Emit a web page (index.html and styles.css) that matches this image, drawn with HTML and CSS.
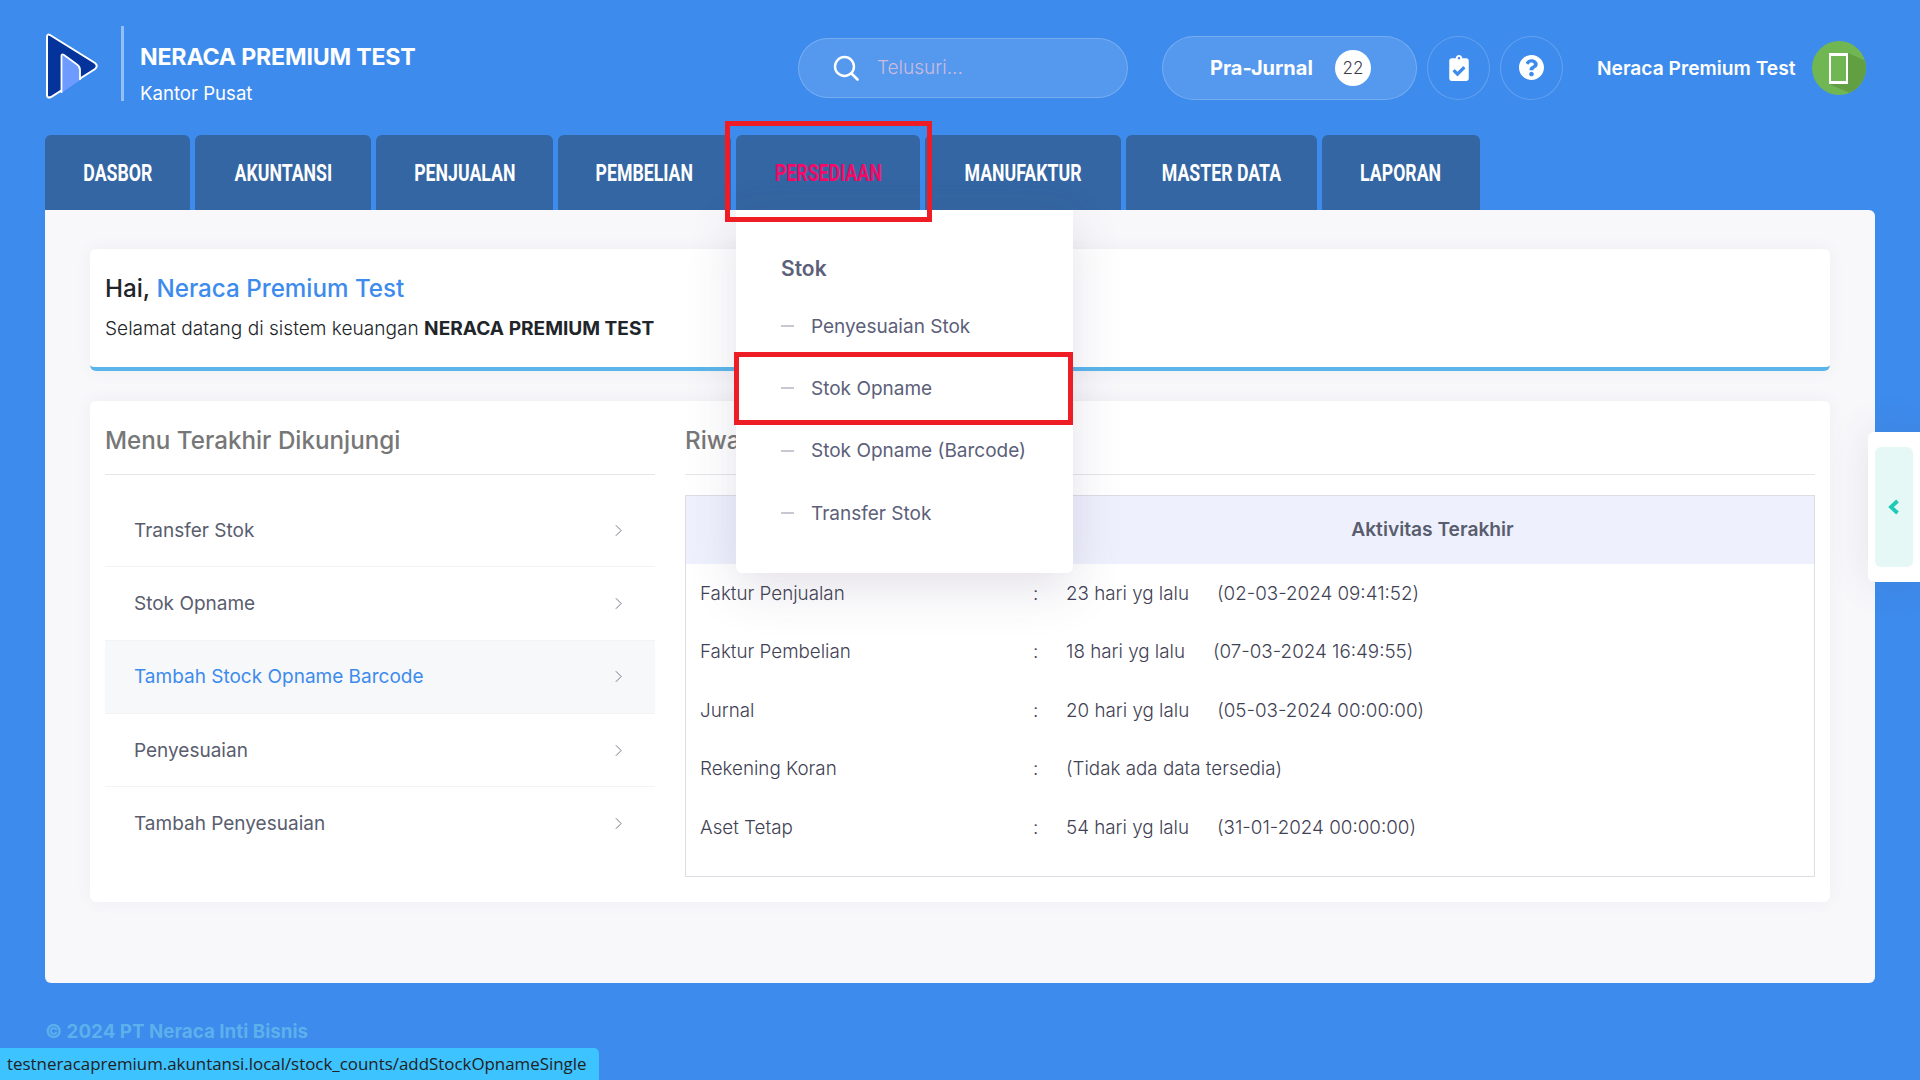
FILE: index.html
```html
<!DOCTYPE html>
<html lang="id">
<head>
<meta charset="utf-8">
<title>Neraca Premium Test</title>
<link rel="stylesheet" href="styles.css">
</head>
<body>
<header class="topbar">
  <div class="brand">
    <svg class="logo" viewBox="0 0 52 66" width="52" height="66">
      <path d="M4 2 L49 30 Q52.500 33 49 36 L5 64 Q1 65.500 1 62 V4 Q1 0.500 4 2 Z" fill="#04349b" stroke="#fff" stroke-width="2"/>
      <path d="M15.500 21 L31 32 Q34 34 34 37 V47 L15.500 60 Z" fill="#6d9bff"/>
      <path d="M15.500 60 V23 Q15.500 20.500 18 22 L31 31.500 Q34 33.500 34 37 V47" fill="none" stroke="#fff" stroke-width="1.800"/>
    </svg>
    <div class="brand-rule"></div>
    <div class="brand-text">
      <div class="brand-name">NERACA PREMIUM TEST</div>
      <div class="brand-office">Kantor Pusat</div>
    </div>
  </div>
  <div class="search">
    <svg class="search-icon" viewBox="0 0 26 26" width="26" height="26"><circle cx="11.500" cy="11.500" r="9.500" fill="none" stroke="#fff" stroke-width="2.400"/><path d="M18.500 18.500 L24.500 24.500" stroke="#fff" stroke-width="2.600" stroke-linecap="round"/></svg>
    <span class="search-text">Telusuri...</span>
  </div>
  <div class="pill">
    <span class="pill-text">Pra-Jurnal</span>
    <span class="pill-badge">22</span>
  </div>
  <div class="round">
    <svg viewBox="0 0 384 512" width="20" height="26"><path fill="#fff" d="M336 64h-80c0-35.300-28.700-64-64-64s-64 28.700-64 64H48C21.500 64 0 85.500 0 112v352c0 26.500 21.500 48 48 48h288c26.500 0 48-21.500 48-48V112c0-26.500-21.500-48-48-48zM192 40c13.300 0 24 10.700 24 24s-10.700 24-24 24-24-10.700-24-24 10.700-24 24-24zm121.200 231.800l-143 141.800c-4.700 4.700-12.300 4.600-17-.1l-82.600-83.300c-4.700-4.700-4.600-12.300.1-17L99.100 285c4.700-4.700 12.300-4.600 17 .1l46 46.400 106-105.200c4.700-4.700 12.300-4.600 17 .1l28.200 28.400c4.700 4.800 4.600 12.300-.1 17z"/></svg>
  </div>
  <div class="round">
    <svg viewBox="8 8 496 496" width="25" height="25"><path fill="#fff" d="M504 256c0 136.997-111.043 248-248 248S8 392.997 8 256C8 119.083 119.043 8 256 8s248 111.083 248 248zM262.655 90c-54.497 0-89.255 22.957-116.549 63.758-3.536 5.286-2.353 12.415 2.715 16.258l34.699 26.310c5.205 3.947 12.621 3.008 16.665-2.122 17.864-22.658 30.113-35.797 57.303-35.797 20.429 0 45.698 13.148 45.698 32.958 0 14.976-12.363 22.667-32.534 33.976C247.128 238.528 216 254.941 216 296v4c0 6.627 5.373 12 12 12h56c6.627 0 12-5.373 12-12v-1.333c0-28.462 83.186-29.647 83.186-106.667 0-58.002-60.165-102-116.531-102zM256 338c-25.365 0-46 20.635-46 46 0 25.364 20.635 46 46 46s46-20.636 46-46c0-25.365-20.635-46-46-46z"/></svg>
  </div>
  <div class="user">
    <span class="user-name">Neraca Premium Test</span>
    <svg class="avatar" viewBox="0 0 54 54" width="54" height="54">
      <defs><clipPath id="avatar-clip"><circle cx="27" cy="27" r="27"/></clipPath></defs>
      <circle cx="27" cy="27" r="27" fill="#70b653"/>
      <path d="M36 12 L56 21 V56 L38 52 L17 43 Z" fill="#629f42" clip-path="url(#avatar-clip)"/>
      <rect x="17" y="12" width="19" height="31" fill="#fff"/>
      <rect x="19" y="15" width="15" height="25" fill="#70b653"/>
    </svg>
  </div>
</header>

<nav class="tabs">
  <a class="tab"><span>DASBOR</span></a>
  <a class="tab"><span>AKUNTANSI</span></a>
  <a class="tab"><span>PENJUALAN</span></a>
  <a class="tab"><span>PEMBELIAN</span></a>
  <a class="tab tab-active"><span>PERSEDIAAN</span></a>
  <a class="tab"><span>MANUFAKTUR</span></a>
  <a class="tab"><span>MASTER DATA</span></a>
  <a class="tab"><span>LAPORAN</span></a>
</nav>

<main class="content">
  <section class="card greet">
    <h2 class="greet-title">Hai, <span class="accent">Neraca Premium Test</span></h2>
    <p class="greet-sub">Selamat datang di sistem keuangan <b>NERACA PREMIUM TEST</b></p>
  </section>
  <section class="card panel">
    <div class="col">
      <h3 class="col-title">Menu Terakhir Dikunjungi</h3>
      <ul class="visits">
        <li class="visit"><span>Transfer Stok</span><svg class="chev" viewBox="0 0 8 14" width="7" height="13"><path d="M1 1 L7 7 L1 13" fill="none" stroke="#6f7283" stroke-width="1.100"/></svg></li>
        <li class="visit"><span>Stok Opname</span><svg class="chev" viewBox="0 0 8 14" width="7" height="13"><path d="M1 1 L7 7 L1 13" fill="none" stroke="#6f7283" stroke-width="1.100"/></svg></li>
        <li class="visit visit-active"><span>Tambah Stock Opname Barcode</span><svg class="chev" viewBox="0 0 8 14" width="7" height="13"><path d="M1 1 L7 7 L1 13" fill="none" stroke="#6f7283" stroke-width="1.100"/></svg></li>
        <li class="visit"><span>Penyesuaian</span><svg class="chev" viewBox="0 0 8 14" width="7" height="13"><path d="M1 1 L7 7 L1 13" fill="none" stroke="#6f7283" stroke-width="1.100"/></svg></li>
        <li class="visit"><span>Tambah Penyesuaian</span><svg class="chev" viewBox="0 0 8 14" width="7" height="13"><path d="M1 1 L7 7 L1 13" fill="none" stroke="#6f7283" stroke-width="1.100"/></svg></li>
      </ul>
    </div>
    <div class="col">
      <h3 class="col-title">Riwayat</h3>
      <div class="log">
        <div class="log-head"><span></span><span class="log-head-cell">Aktivitas Terakhir</span></div>
        <div class="log-row"><span>Faktur Penjualan</span><span>:</span><span class="log-val"><span>23 hari yg lalu</span><span>(02-03-2024 09:41:52)</span></span></div>
        <div class="log-row"><span>Faktur Pembelian</span><span>:</span><span class="log-val"><span>18 hari yg lalu</span><span>(07-03-2024 16:49:55)</span></span></div>
        <div class="log-row"><span>Jurnal</span><span>:</span><span class="log-val"><span>20 hari yg lalu</span><span>(05-03-2024 00:00:00)</span></span></div>
        <div class="log-row"><span>Rekening Koran</span><span>:</span><span class="log-val"><span>(Tidak ada data tersedia)</span></span></div>
        <div class="log-row"><span>Aset Tetap</span><span>:</span><span class="log-val"><span>54 hari yg lalu</span><span>(31-01-2024 00:00:00)</span></span></div>
      </div>
    </div>
  </section>
</main>

<footer class="foot">© 2024 PT Neraca Inti Bisnis</footer>

<div class="menu">
  <div class="menu-head">Stok</div>
  <div class="menu-item"><i class="dash"></i>Penyesuaian Stok</div>
  <div class="menu-item"><i class="dash"></i>Stok Opname</div>
  <div class="menu-item"><i class="dash"></i>Stok Opname (Barcode)</div>
  <div class="menu-item"><i class="dash"></i>Transfer Stok</div>
</div>

<div class="mark mark-tab"></div>
<div class="mark mark-item"></div>

<aside class="sidetab">
  <div class="sidetab-inner">
    <svg viewBox="0 0 12 16" width="12" height="16"><path d="M9.500 2 L3 8 L9.500 14" fill="none" stroke="#1dc9b7" stroke-width="3.800"/></svg>
  </div>
</aside>

<div class="status">testneracapremium.akuntansi.local/stock_counts/addStockOpnameSingle</div>
</body>
</html>
```

FILE: styles.css
```css
* { box-sizing: border-box; }
html, body { margin: 0; padding: 0; }
body {
  width: 1920px;
  height: 1080px;
  overflow: hidden;
  position: relative;
  background: #3d8bec;
  font-family: Inter, "Noto Sans", sans-serif;
  color: #595d6e;
}

/* top bar */
.topbar {
  height: 135px;
  padding-left: 46px;
  display: flex;
  align-items: center;
}
.brand { width: 752px; display: flex; align-items: center; }
.logo { display: block; flex: none; margin-top: -3px; }
.brand-rule { width: 3px; height: 75px; margin-left: 23px; margin-top: -8px; background: rgba(255,255,255,.45); }
.brand-text { margin-left: 16px; color: #fff; padding-top: 13px; }
.brand-name { font-size: 23.200px; font-weight: 700; line-height: 28px; letter-spacing: -.2px; white-space: nowrap; }
.brand-office { font-size: 18.600px; font-weight: 400; line-height: 24px; margin-top: 10px; }

.search {
  width: 330px;
  height: 60px;
  border-radius: 30px;
  background: rgba(255,255,255,.12);
  border: 1px solid rgba(255,255,255,.2);
  display: flex;
  align-items: center;
  padding-left: 34px;
}
.search-text { margin-left: 18px; font-size: 19px; font-weight: 300; color: #cdbbdd; }

.pill {
  width: 255px;
  height: 64px;
  margin-left: 34px;
  border-radius: 32px;
  background: rgba(255,255,255,.12);
  border: 1px solid rgba(255,255,255,.2);
  display: flex;
  align-items: center;
  padding-left: 47px;
}
.pill-text { width: 125px; font-size: 20px; font-weight: 700; color: #fff; }
.pill-badge {
  width: 36px;
  height: 36px;
  border-radius: 50%;
  background: #fff;
  color: #3a3d4d;
  font-size: 17px;
  font-weight: 300;
  display: flex;
  align-items: center;
  justify-content: center;
}
.round {
  width: 63px;
  height: 64px;
  margin-left: 10px;
  border-radius: 50%;
  border: 1px solid rgba(255,255,255,.2);
  display: flex;
  align-items: center;
  justify-content: center;
}
.user { margin-left: 34px; width: 269px; display: flex; align-items: center; }
.user-name { width: 215px; font-size: 19.200px; font-weight: 600; color: #fff; white-space: nowrap; }
.avatar { display: block; flex: none; }

/* tabs */
.tabs {
  height: 75px;
  margin-left: 45px;
  display: grid;
  grid-template-columns: 145px 176px 177px 173px 184px 196px 191px 158px;
  gap: 5px;
  justify-content: start;
}
.tab {
  display: flex;
  align-items: center;
  justify-content: center;
  background: #3366a2;
  border-radius: 6px 6px 0 0;
  color: #fff;
  font-family: "Liberation Sans Narrow", "Roboto", sans-serif;
  font-size: 23px;
  font-weight: 700;
  padding-top: 2px;
}
.tab span { display: inline-block; transform: scaleX(.77); white-space: nowrap; }
.tab-active { color: #f50a68; }

/* content */
.content {
  width: 1830px;
  height: 773px;
  margin-left: 45px;
  padding: 39px 45px 0;
  background: #f8f8fb;
  border-radius: 0 6px 6px 6px;
  display: flex;
  flex-direction: column;
  gap: 30px;
}
.card {
  background: #fff;
  border-radius: 6px;
  box-shadow: 0 0 16px rgba(82,63,105,.06);
}
.greet {
  height: 122px;
  padding: 25px 15px 0;
  border-bottom: 4px solid #5ab6ea;
}
.greet-title { margin: 0; font-size: 24.200px; line-height: 30px; font-weight: 500; color: #212529; }
.accent { color: #3d8bec; }
.greet-sub { margin: 12px 0 0; font-size: 19.100px; line-height: 24px; font-weight: 300; color: #212529; }
.greet-sub b { font-weight: 700; }

.panel {
  height: 501px;
  padding: 0 15px;
  display: grid;
  grid-template-columns: 550px 1130px;
  column-gap: 30px;
}
.col-title {
  margin: 0;
  height: 74px;
  border-bottom: 1px solid #e6e6ea;
  font-size: 24.200px;
  line-height: 80px;
  font-weight: 500;
  color: #777;
  white-space: nowrap;
}
.visits { list-style: none; margin: 0; padding: 19px 0 0; }
.visit {
  height: 73.330px;
  padding: 0 33px 0 29px;
  border-bottom: 1px solid #f3f3f6;
  display: flex;
  align-items: center;
  justify-content: space-between;
  font-size: 19px;
  font-weight: 400;
  color: #595d6e;
}
.visit:last-child { border-bottom: 0; }
.visit-active { background: #f7f8fa; color: #3d8bec; }
.chev { display: block; }

.log { margin-top: 20px; height: 382px; border: 1px solid #dddde3; }
.log-head {
  height: 68px;
  background: #eef1fd;
  display: grid;
  grid-template-columns: 365px 1fr;
  align-items: center;
  text-align: center;
  font-size: 19.200px;
  font-weight: 600;
  color: #595d6e;
  padding-bottom: 2px;
}
.log-row {
  height: 58.500px;
  padding-left: 14px;
  display: grid;
  grid-template-columns: 333px 33px 1fr;
  align-items: center;
  font-size: 18.800px;
  font-weight: 300;
  color: #3f4254;
}
.log-val { display: flex; gap: 28px; }

/* footer */
.foot {
  margin: 37px 0 0 45px;
  font-size: 18.800px;
  line-height: 24px;
  font-weight: 700;
  color: #5cb0ec;
}

/* dropdown over content */
.menu {
  position: absolute;
  left: 736px;
  top: 210px;
  width: 337px;
  height: 363px;
  background: #fff;
  border-radius: 0 0 6px 6px;
  box-shadow: 0 15px 50px rgba(82,63,105,.16);
  padding-top: 27px;
  color: #5c6079;
}
.menu-head { margin-left: 45px; height: 58px; font-size: 21px; line-height: 63px; font-weight: 600; }
.menu-item {
  height: 62.300px;
  padding-left: 45px;
  display: flex;
  align-items: center;
  font-size: 19px;
  white-space: nowrap;
}
.dash { width: 13px; height: 2px; margin-right: 17px; background: #c8c8d2; }

/* red annotation frames */
.mark { position: absolute; border: 5px solid #ee1c25; }
.mark-tab { left: 725px; top: 121px; width: 207px; height: 101px; }
.mark-item { left: 734px; top: 352px; width: 339px; height: 73px; }

/* side toggle */
.sidetab {
  position: absolute;
  right: 0;
  top: 432px;
  width: 52px;
  height: 150px;
  padding: 15px 7px;
  background: #fff;
  border-radius: 6px 0 0 6px;
  box-shadow: 0 0 40px rgba(82,63,105,.12);
}
.sidetab-inner {
  height: 120px;
  width: 38px;
  background: #e6f8f5;
  border-radius: 6px;
  display: flex;
  align-items: center;
  justify-content: center;
}

/* browser status bubble */
.status {
  position: absolute;
  left: 0;
  bottom: 0;
  width: 599px;
  height: 32px;
  padding-left: 7px;
  background: #3dc3ff;
  border-radius: 0 5px 0 0;
  font-family: "Open Sans", sans-serif;
  font-size: 16.900px;
  line-height: 32px;
  color: #222;
  white-space: nowrap;
}
```
